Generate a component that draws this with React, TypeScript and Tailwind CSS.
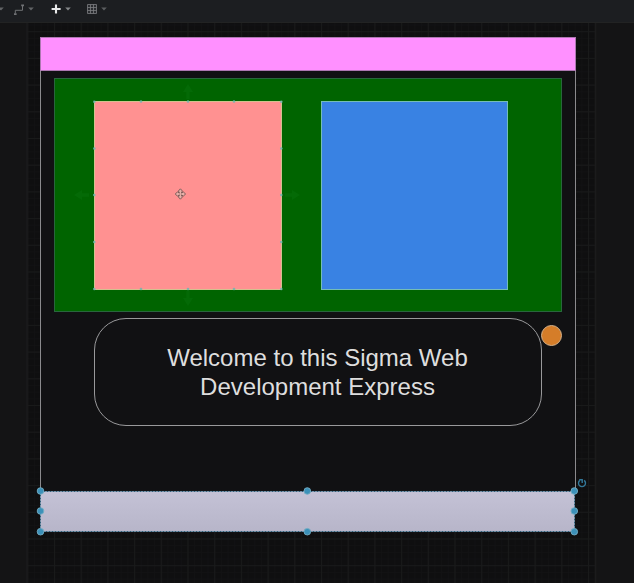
import React from "react";

const barHandles: [number, number][] = [
  [40.5, 491], [40.5, 511], [40.5, 531.7],
  [307.3, 491], [307.3, 531.7],
  [574.3, 491], [574.3, 511], [574.3, 531.7],
];

const hintPoints: [number, number][] = [
  [94.3, 101.8], [141, 101.5], [188, 101.5], [234, 101.5], [281.3, 101.8],
  [94.3, 148.5], [94.3, 195], [94.3, 242], [281.3, 148.5], [281.3, 195], [281.3, 242],
  [94.3, 289], [141, 289], [188, 289], [234, 289], [281.3, 289],
];

const hintArrows = [
  "translate(188 92) rotate(0)",
  "translate(292 195) rotate(90)",
  "translate(188 298) rotate(180)",
  "translate(82 195) rotate(270)",
];

function Caret({ color }: { color: string }) {
  return (
    <svg width="6" height="4" viewBox="0 0 6 4" className="shrink-0">
      <path d="M0.2 0.4h5.6L3 3.4z" fill={color} />
    </svg>
  );
}

function Toolbar() {
  return (
    <header className="flex h-[23px] shrink-0 items-start border-b border-[#222323] bg-[#1c1e21]">
      <div className="flex h-[18px] items-center">
        <div className="-ml-[2px] flex"><Caret color="#626467" /></div>
        <svg width="13" height="13" viewBox="0 0 13 13" className="ml-[9px]" fill="none" stroke="#707275">
          <path d="M2.3 10.5V7.3H9.5V3" />
          <path d="M1 11.2h2.6M8.2 2.4h2.8" strokeWidth="1.8" />
        </svg>
        <div className="ml-[1.5px] flex"><Caret color="#626467" /></div>
        <svg width="10" height="10" viewBox="0 0 10 10" className="ml-[17px]" stroke="#e8e9ea" strokeWidth="2.1">
          <path d="M0.6 5h9M5 0.6v9" />
        </svg>
        <div className="ml-[4px] flex"><Caret color="#85888a" /></div>
        <svg width="10" height="10" viewBox="0 0 10 10" className="ml-[16px]" fill="#2a2c30" stroke="#7c7e81" strokeWidth="0.8">
          <path d="M0.5 0.5h9v9h-9zM0.5 3.5h9M0.5 6.5h9M3.5 0.5v9M6.5 0.5v9" />
        </svg>
        <div className="ml-[4px] flex"><Caret color="#5c5e61" /></div>
      </div>
    </header>
  );
}

function PageGrid() {
  return (
    <svg className="absolute inset-0" width="634" height="583">
      <defs>
        <pattern id="minor" width="6.675" height="6.675" x="27.3" y="31.2" patternUnits="userSpaceOnUse">
          <path d="M0 0.4H6.675M0.4 0V6.675" stroke="#131314" strokeWidth="0.7" />
        </pattern>
        <pattern id="major" width="26.7" height="26.7" x="27.3" y="31.2" patternUnits="userSpaceOnUse">
          <path d="M0 0.5H26.7M0.5 0V26.7" stroke="#191a1a" />
        </pattern>
      </defs>
      <rect x="27" y="23" width="569" height="560" fill="#0f0f10" />
      <rect x="27" y="23" width="569" height="560" fill="url(#minor)" />
      <rect x="27" y="23" width="569" height="560" fill="url(#major)" />
      <path d="M27 23V583M595.5 23V583" stroke="#1b1b1c" strokeWidth="1.6" />
    </svg>
  );
}

function SelectionOverlay() {
  return (
    <svg className="absolute inset-0" width="634" height="583">
      <g fill="#2fae4b" opacity="0.09">
        {hintArrows.map((t) => (
          <path key={t} transform={t} d="M-1.7 7V0H-5L0 -8L5 0H1.7V7z" />
        ))}
      </g>
      <g fill="#70b5b1" opacity="0.85">
        {hintPoints.map(([x, y]) => (
          <circle key={`${x}-${y}`} cx={x} cy={y} r="1.3" />
        ))}
      </g>
      <g transform="translate(180.4 194)" fill="#e5b0a8" stroke="#735653" strokeWidth="0.9">
        <path d="M0 -5.2L2 -3L0.9 -0.9L3 -2L5.2 0L3 2L0.9 0.9L2 3L0 5.2L-2 3L-0.9 0.9L-3 2L-5.2 0L-3 -2L-0.9 -0.9L-2 -3z" />
      </g>
      <rect x="40.5" y="491.5" width="534" height="40" fill="none" stroke="#306179" strokeWidth="1" strokeDasharray="2 1" />
      <g fill="#3c91b9" stroke="#74adc3" strokeWidth="0.9">
        {barHandles.map(([x, y]) => (
          <circle key={`${x}-${y}`} cx={x} cy={y} r="3.3" />
        ))}
      </g>
      <g fill="none" stroke="#327798" strokeWidth="1.4">
        <path d="M579.8 480.4A3.5 3.5 0 1 0 584.2 480.4" />
        <path d="M579.2 479.7H582.2V483" />
      </g>
    </svg>
  );
}

export default function App() {
  return (
    <div className="relative flex h-[583px] w-[634px] flex-col overflow-hidden bg-[#141415] font-['Liberation_Sans',Arial,sans-serif]">
      <PageGrid />
      <div className="relative flex flex-col"><Toolbar /></div>
      <div className="absolute top-[37px] left-[39.5px] h-[455px] w-[536.5px] border border-[#8b8a8d] bg-[#111113]" />
      <div className="absolute top-[37px] left-[40px] h-[33.5px] w-[535.5px] border border-[#ad78b1] bg-[#ff90ff]" />
      <div className="absolute top-[78px] left-[54px] h-[234px] w-[508px] border border-[#29663d] bg-[#006400]" />
      <div className="absolute top-[101px] left-[94px] h-[188.5px] w-[188px] border border-[#d3c18f] bg-[#ff9191]" />
      <div className="absolute top-[101px] left-[320.5px] h-[188.5px] w-[187.5px] border border-[#75bdb5] bg-[#3982e3]" />
      <div className="absolute top-[318px] left-[94px] flex h-[108px] w-[448px] items-center justify-center rounded-[32px] border border-[#99999b] bg-[#111113] text-center text-[24px] leading-[29px] text-[#dedede]">
        <p className="w-[341px] pr-px">
          <span className="block whitespace-nowrap">Welcome to this Sigma Web</span>
          <span className="block whitespace-nowrap">Development Express</span>
        </p>
      </div>
      <div className="absolute top-[325px] left-[540.5px] size-[21px] rounded-full border border-[#d4b18a] bg-[#d57d29]" />
      <div className="absolute top-[491px] left-[40px] h-[41px] w-[535px] bg-linear-to-b from-[#c4c2d6] to-[#b7b5c9]" />
      <SelectionOverlay />
    </div>
  );
}
